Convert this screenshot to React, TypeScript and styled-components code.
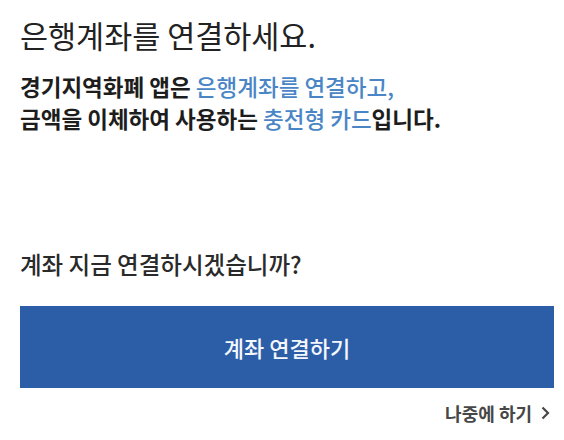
import React from 'react';
import styled, { createGlobalStyle } from 'styled-components';

const GlobalStyle = createGlobalStyle`
  html, body {
    margin: 0;
    padding: 0;
    background: #ffffff;
  }
  body {
    font-family: "Noto Sans CJK KR", "Noto Sans", sans-serif;
    color: #222222;
  }
`;

const Page = styled.div`
  width: 564px;
  height: 440px;
  box-sizing: border-box;
  padding: 15px 10px 0 20px;
  display: flex;
  flex-direction: column;
  overflow: hidden;
`;

const Title = styled.h1`
  margin: 0;
  font-size: 30.5px;
  line-height: 40px;
  font-weight: 400;
  color: #222222;
`;

const Description = styled.p`
  margin: 15px 0 0;
  font-size: 22.5px;
  line-height: 32px;
  font-weight: 700;
  color: #1d1d1d;
`;

const Highlight = styled.span`
  color: #4a86c6;
  font-weight: 500;
`;

const Question = styled.p`
  margin: 114px 0 0;
  font-size: 23.5px;
  line-height: 32px;
  font-weight: 500;
  color: #2a2a2a;
`;

const PrimaryButton = styled.button`
  margin-top: 26px;
  height: 82px;
  width: 100%;
  border: none;
  background: #2c5ea8;
  color: #f4f7fc;
  font-family: inherit;
  font-size: 22px;
  font-weight: 500;
  cursor: pointer;
`;

const LaterLink = styled.a`
  margin-top: 13px;
  margin-right: 4px;
  align-self: flex-end;
  display: flex;
  align-items: center;
  gap: 8px;
  font-size: 18px;
  line-height: 24px;
  font-weight: 700;
  color: #474747;
  text-decoration: none;
  cursor: pointer;
`;

const Chevron = () => (
  <svg width="10" height="14" viewBox="0 0 10 14" fill="none">
    <path d="M2.5 1.5 L8 7 L2.5 12.5" stroke="#474747" strokeWidth="2.2" />
  </svg>
);

const App: React.FC = () => {
  return (
    <>
      <GlobalStyle />
      <Page>
        <Title>은행계좌를 연결하세요.</Title>
        <Description>
          경기지역화폐 앱은 <Highlight>은행계좌를 연결하고,</Highlight>
          <br />
          금액을 이체하여 사용하는 <Highlight>충전형 카드</Highlight>입니다.
        </Description>
        <Question>계좌 지금 연결하시겠습니까?</Question>
        <PrimaryButton>계좌 연결하기</PrimaryButton>
        <LaterLink>
          나중에 하기
          <Chevron />
        </LaterLink>
      </Page>
    </>
  );
};

export default App;
